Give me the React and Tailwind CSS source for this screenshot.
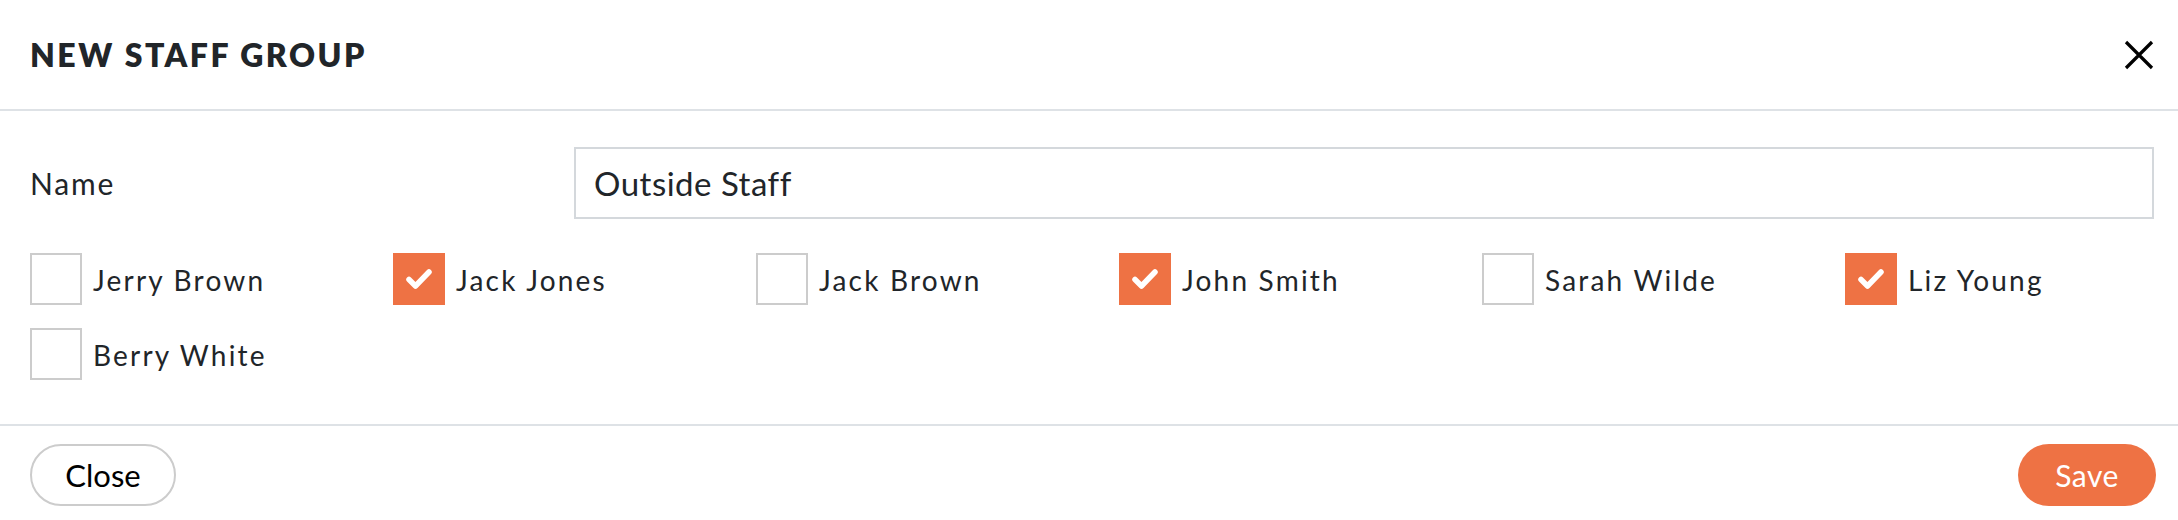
import React, { useState } from "react";

const staff = [
  { id: 1, name: "Jerry Brown", checked: false },
  { id: 2, name: "Jack Jones", checked: true },
  { id: 3, name: "Jack Brown", checked: false },
  { id: 4, name: "John Smith", checked: true },
  { id: 5, name: "Sarah Wilde", checked: false },
  { id: 6, name: "Liz Young", checked: true },
  { id: 7, name: "Berry White", checked: false },
];

const font = { fontFamily: "Lato, 'Open Sans', sans-serif" };

const Checkbox = ({ checked }) =>
  checked ? (
    <span className="flex h-[52px] w-[52px] shrink-0 items-center justify-center bg-[#ee7244]">
      <svg width="30" height="24" viewBox="0 0 30 24" fill="none">
        <polyline points="5,12.5 11.5,19 25,5" stroke="#fff" strokeWidth="5.5" strokeLinecap="round" strokeLinejoin="round" />
      </svg>
    </span>
  ) : (
    <span className="h-[52px] w-[52px] shrink-0 border-2 border-[#cccccc] bg-white" />
  );

export default function App() {
  const [selected, setSelected] = useState(staff.filter((s) => s.checked).map((s) => s.id));
  const [name, setName] = useState("Outside Staff");

  const toggle = (id) =>
    setSelected((prev) => (prev.includes(id) ? prev.filter((x) => x !== id) : [...prev, id]));

  return (
    <div className="h-[520px] w-[2178px] bg-white text-[#212529]" style={{ fontFamily: "Lato, sans-serif" }}>
      {/* header */}
      <div className="flex h-[111px] items-center justify-between border-b-2 border-[#dee2e6] pl-[30px] pr-[22px]">
        <h2 className="text-[32px] font-extrabold tracking-[2.5px] text-[#212529]">NEW STAFF GROUP</h2>
        <button className="flex h-[34px] w-[34px] items-center justify-center">
          <svg width="32" height="32" viewBox="0 0 32 32">
            <path d="M3 3 L29 29 M29 3 L3 29" stroke="#000" strokeWidth="3.2" />
          </svg>
        </button>
      </div>

      {/* body */}
      <div className="h-[313px] pl-[30px] pr-[24px] pt-[36px]">
        <div className="flex items-center">
          <label className="w-[544px] text-[30px] tracking-[1.8px]">Name</label>
          <input
            value={name}
            onChange={(e) => setName(e.target.value)}
            className="h-[72px] flex-1 border-2 border-[#d4d8dc] px-[18px] text-[33px] tracking-[0.5px] text-[#212529] outline-none"
            style={font}
          />
        </div>

        <div className="mt-[34px] grid grid-cols-[repeat(6,363px)] gap-y-[23px]">
          {staff.map((s) => (
            <label key={s.id} className="flex cursor-pointer items-center gap-[11px]" onClick={() => toggle(s.id)}>
              <Checkbox checked={selected.includes(s.id)} />
              <span className="pt-[2px] text-[28px] tracking-[2.2px]">{s.name}</span>
            </label>
          ))}
        </div>
      </div>

      {/* footer */}
      <div className="flex h-[96px] items-start justify-between border-t-2 border-[#dee2e6] pl-[30px] pr-[22px] pt-[18px]">
        <button className="h-[62px] w-[146px] rounded-full border-2 border-[#cccccc] bg-white text-[31px] text-black">
          Close
        </button>
        <button className="h-[62px] w-[138px] rounded-full bg-[#ee7244] text-[30px] tracking-[0.5px] text-white">
          Save
        </button>
      </div>
    </div>
  );
}
